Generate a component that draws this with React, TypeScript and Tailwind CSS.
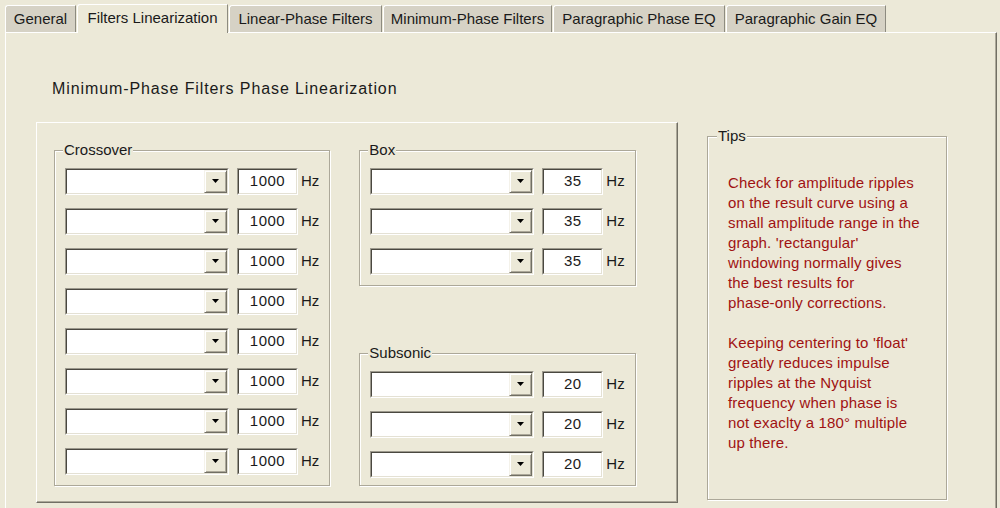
const tabs = [
  { label: "General", w: "w-[71px]" },
  { label: "Filters Linearization", w: "w-[151px]", active: true },
  { label: "Linear-Phase Filters", w: "w-[153px]" },
  { label: "Minimum-Phase Filters", w: "w-[169px]" },
  { label: "Paragraphic Phase EQ", w: "w-[172px]" },
  { label: "Paragraphic Gain EQ", w: "w-[160px]" },
];

const tipLines1 = [
  "Check for amplitude ripples",
  "on the result curve using a",
  "small amplitude range in the",
  "graph. 'rectangular'",
  "windowing normally gives",
  "the best results for",
  "phase-only corrections.",
];

const tipLines2 = [
  "Keeping centering to 'float'",
  "greatly reduces impulse",
  "ripples at the Nyquist",
  "frequency when phase is",
  "not exaclty a 180° multiple",
  "up there.",
];

function Combo() {
  return (
    <div className="h-[27px] w-[164px] border border-t-[#9c998d] border-l-[#9c998d] border-b-white border-r-white">
      <div className="flex h-full w-full items-center justify-end border border-t-[#4a4840] border-l-[#4a4840] border-b-[#e4e1d4] border-r-[#e4e1d4] bg-white">
        {/* dropdown button */}
        <div className="flex h-full w-[23px] items-center justify-center border border-t-[#f4f2ea] border-l-[#f4f2ea] border-b-[#716f64] border-r-[#716f64] bg-[#ece9d8] shadow-[inset_1px_1px_0_#fff,inset_-1px_-1px_0_#aca899]">
          <svg width="8" height="5" viewBox="0 0 8 5">
            <path d="M0 0h7L3.5 4z" fill="#000" />
          </svg>
        </div>
      </div>
    </div>
  );
}

function FreqRow({ value }: { value: string }) {
  return (
    <div className="flex items-center">
      <Combo />
      <div className="ml-[8px] h-[27px] w-[61px] border border-t-[#9c998d] border-l-[#9c998d] border-b-white border-r-white">
        <div className="flex h-full w-full items-center justify-center border border-t-[#4a4840] border-l-[#4a4840] border-b-[#e4e1d4] border-r-[#e4e1d4] bg-white tracking-[0.5px]">
          {value}
        </div>
      </div>
      <span className="ml-[3px]">Hz</span>
    </div>
  );
}

function Group({
  title,
  value,
  rows,
  className,
}: {
  title: string;
  value: string;
  rows: number;
  className?: string;
}) {
  return (
    <fieldset
      className={`w-[273px] border border-[#aca899] px-[10px] pt-[10px] shadow-[inset_1px_1px_0_#fff,1px_1px_0_#fff] ${className ?? ""}`}
    >
      <legend className="-ml-[2px] bg-[#ece9d8] px-[1px] leading-[16px]">
        {title}
      </legend>
      <div className="flex flex-col gap-[13px]">
        {Array.from({ length: rows }).map((_, i) => (
          <FreqRow key={i} value={value} />
        ))}
      </div>
    </fieldset>
  );
}

export default function App() {
  return (
    <div className="h-[508px] w-[1000px] overflow-hidden bg-[#ece9d8] font-['Liberation_Sans',Arial,sans-serif] text-[15px] text-[#1a1a1a]">
      {/* Tabs */}
      <div className="relative z-10 flex h-[32px] items-end pl-[5px]">
        {tabs.map((t) =>
          t.active ? (
            <div
              key={t.label}
              className={`${t.w} ml-[1px] -mb-[1px] flex h-[29px] items-center justify-center rounded-tl-[3px] border-t border-l border-r border-t-white border-l-white border-r-[#8d8b80] bg-[#ece9d8] pb-[1px]`}
            >
              {t.label}
            </div>
          ) : (
            <div
              key={t.label}
              className={`${t.w} ml-[1px] flex h-[27px] items-center justify-center rounded-tl-[3px] border-t border-l border-r border-t-white border-l-white border-r-[#8d8b80] bg-[#d6d2c5] first:ml-0`}
            >
              {t.label}
            </div>
          )
        )}
      </div>

      {/* Panel */}
      <div className="ml-[5px] h-[490px] w-[992px] border-t border-l border-r border-t-white border-l-white border-r-[#716f64] shadow-[inset_-1px_0_0_#aca899] pl-[30px]">
        <div className="ml-[16px] mt-[47px] h-[18px] text-[16px] leading-[18px] tracking-[0.9px]">
          Minimum-Phase Filters Phase Linearization
        </div>

        <div className="mt-[24px] flex items-start">
          {/* Raised frame */}
          <div className="flex h-[381px] w-[642px] items-start gap-[29px] border border-t-white border-l-white border-b-[#716f64] border-r-[#716f64] pl-[17px] pt-[19px] shadow-[inset_-1px_-1px_0_#aca899]">
            <Group title="Crossover" value="1000" rows={8} className="pb-[10px]" />
            <div className="flex flex-col">
              <Group title="Box" value="35" rows={3} className="pb-[10px]" />
              <Group title="Subsonic" value="20" rows={3} className="mt-[59px] pb-[7px]" />
            </div>
          </div>

          {/* Tips */}
          <fieldset className="ml-[29px] mt-[6px] h-[372px] w-[240px] border border-[#aca899] pl-[20px] pt-[29px] shadow-[inset_1px_1px_0_#fff,1px_1px_0_#fff]">
            <legend className="-ml-[11px] bg-[#ece9d8] px-[1px] leading-[16px]">
              Tips
            </legend>
            <div className="leading-[20px] tracking-[0.15px] text-[#a01212]">
              {tipLines1.map((l) => (
                <div key={l}>{l}</div>
              ))}
              <div className="h-[20px]" />
              {tipLines2.map((l) => (
                <div key={l}>{l}</div>
              ))}
            </div>
          </fieldset>
        </div>
      </div>
    </div>
  );
}
